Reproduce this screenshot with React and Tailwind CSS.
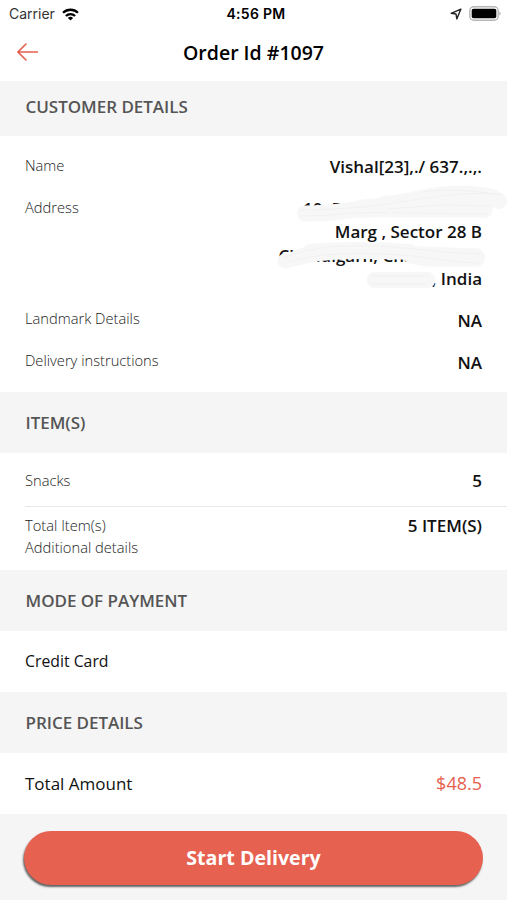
const details = [
  { label: "Landmark Details", value: "NA" },
  { label: "Delivery instructions", value: "NA" },
];

function StatusBar() {
  return (
    <div className="flex h-7 items-center justify-between pl-[9px] pr-[6px] font-['Inter','Liberation_Sans',sans-serif] text-black">
      <div className="flex w-[120px] items-center gap-[7px]">
        <span className="text-[14px] leading-none text-[#333]">Carrier</span>
        <svg width="17" height="13" viewBox="0 0 17 13" fill="none" stroke="#000" strokeWidth="2.3">
          <path d="M1 4.8C5.2 .7 11.8 .7 16 4.8" />
          <path d="M3.9 8C6.5 5.4 10.5 5.4 13.1 8" />
          <path d="M8.5 12.6 5.9 9.9C7.4 8.5 9.6 8.5 11.1 9.9Z" fill="#000" stroke="none" />
        </svg>
      </div>
      <span className="ml-[2px] text-[14px] font-semibold leading-none tracking-[0.3px]">4:56 PM</span>
      <div className="flex w-[120px] items-center justify-end gap-[7px]">
        <svg width="12" height="12" viewBox="0 0 12 12" fill="none" stroke="#222" strokeWidth="1.4" strokeLinejoin="round">
          <path d="M10.9 1.1 1.2 5.3 6 6 6.8 10.9Z" />
        </svg>
        <svg className="-mt-[2px]" width="32" height="15" viewBox="0 0 32 15">
          <rect x=".8" y=".8" width="28.4" height="13.4" rx="4" fill="#fff" stroke="#b5b5b5" strokeWidth="1.4" />
          <rect x="2.7" y="2.7" width="24.6" height="9.6" rx="1.8" fill="#000" />
          <path d="M30.5 5.5c1.4.6 1.4 3.4 0 4Z" fill="#999" />
        </svg>
      </div>
    </div>
  );
}

function SectionTitle({ children, className = "h-[61px]" }) {
  return (
    <h2 className={`flex shrink-0 items-center bg-[#f5f5f5] px-[25.5px] text-[17px] font-semibold tracking-[-0.03px] text-[#555] ${className}`}>
      {children}
    </h2>
  );
}

// Marker strokes that hide the private parts of the address
function Redaction() {
  return (
    <svg className="absolute -right-[25px] -top-[9px]" width="234" height="110" viewBox="273 185 234 110" fill="none" stroke="#f7f7f7" strokeLinecap="round" strokeLinejoin="round">
      <path d="M305 213.5C325 213.5 340 212 352 210L390 209" strokeWidth="16" />
      <path d="M360 209C390 206 423 203 443 200S475 206 484 209" strokeWidth="18" />
      <path d="M388 211 485 211" strokeWidth="13" />
      <path d="M385 204C405 202 423 197 443 194.500S480 194.500 492 197L499 201" strokeWidth="16" />
      <path d="M285 261 302 257" strokeWidth="15" />
      <path d="M299 257C315 252 340 251 365 251S395 251 410 252" strokeWidth="16" />
      <path d="M308 249C325 246 350 246 390 247" strokeWidth="9" />
      <path d="M412 255C435 256 458 257 476 257" strokeWidth="18" />
      <path d="M415 257 428 259 477 259" strokeWidth="15" />
      <path d="M374 279H428M374 281 428 281" strokeWidth="14" />
      <g stroke="#ececec" strokeWidth=".6">
        <path d="M301 216C332 216 360 211 391 213L488 214" />
        <path d="M300 210C343 210 376 206 407 201S464 192 494 194" />
        <path d="M387 209 441 205 491 206M423 192C447 188 476 191 502 195" />
        <path d="M283 258C306 248 335 245 372 246S428 252 480 254" />
        <path d="M288 262C316 253 361 252 400 255S451 262 478 263" />
        <path d="M371 276H429M373 284H425" />
      </g>
    </svg>
  );
}

export default function App() {
  return (
    <main className="flex h-[900px] w-full flex-col overflow-hidden bg-white font-['Open_Sans','Noto_Sans',sans-serif] text-[17px] text-[#111]">
      <header className="h-[81px] shrink-0">
        <StatusBar />
        <div className="grid h-12 grid-cols-[80px_1fr_80px] items-center">
          <svg className="ml-[17px]" width="22" height="18" viewBox="0 0 22 18" fill="none" stroke="#e5604f" strokeWidth="1.6" strokeLinecap="round">
            <path d="M1 9H20.5M9 1 1 9 9 17" />
          </svg>
          <h1 className="pt-px text-center text-[19.5px] font-semibold text-black">Order Id #1097</h1>
        </div>
      </header>

      <SectionTitle className="h-[55px] pb-[4px]">CUSTOMER DETAILS</SectionTitle>
      <section className="h-[256px] shrink-0 px-[25px] pt-[19px]">
        <div className="flex h-[42px] justify-between">
          <span className="text-[14.7px] font-light leading-[20px] text-[#222]">Name</span>
          <span className="font-semibold leading-6">Vishal[23],./ 637.,.,.</span>
        </div>
        <div className="flex h-[112px] justify-between">
          <span className="text-[14.7px] font-light leading-[20px] text-[#222]">Address</span>
          <div className="relative -mt-[3px] flex flex-col items-end pt-[3px] font-semibold leading-[23.3px]">
            <span className="w-[179px]">10, Pi</span>
            <span>Marg , Sector 28 B</span>
            <span>Chandigarh, Chandigarh,</span>
            <span>, India</span>
            <Redaction />
          </div>
        </div>
        {details.map((row) => (
          <div key={row.label} className="flex h-[42px] justify-between">
            <span className="text-[14.7px] font-light leading-[19px] text-[#222]">{row.label}</span>
            <span className="font-semibold leading-6">{row.value}</span>
          </div>
        ))}
      </section>

      <SectionTitle>ITEM(S)</SectionTitle>
      <section className="h-[117px] shrink-0 pl-[25px]">
        <div className="flex h-[54px] items-center justify-between border-b border-[#e8e8e8] pr-[25px] pt-[2px]">
          <span className="text-[14.7px] font-light text-[#222]">Snacks</span>
          <span className="font-semibold">5</span>
        </div>
        <div className="flex justify-between pr-[25px] pt-[7px]">
          <div className="text-[14.7px] font-light leading-[22px] text-[#222]">
            <p>Total Item(s)</p>
            <p>Additional details</p>
          </div>
          <span className="font-semibold leading-6">5 ITEM(S)</span>
        </div>
      </section>

      <SectionTitle>MODE OF PAYMENT</SectionTitle>
      <section className="flex h-[61px] shrink-0 items-center px-[25px] text-[15.8px]">Credit Card</section>

      <SectionTitle>PRICE DETAILS</SectionTitle>
      <section className="flex h-[61px] shrink-0 items-center justify-between px-[25px]">
        <span>Total Amount</span>
        <span className="text-[18px] font-medium text-[#e5604f]">$48.5</span>
      </section>

      <footer className="flex-1 bg-[#f5f5f5] px-6 pt-[17px]">
        <button className="h-[54px] w-full rounded-full bg-[#e66150] text-[19.6px] font-bold text-white shadow-[-1px_2px_2px_rgba(0,0,0,0.6)]">
          Start Delivery
        </button>
      </footer>
    </main>
  );
}
